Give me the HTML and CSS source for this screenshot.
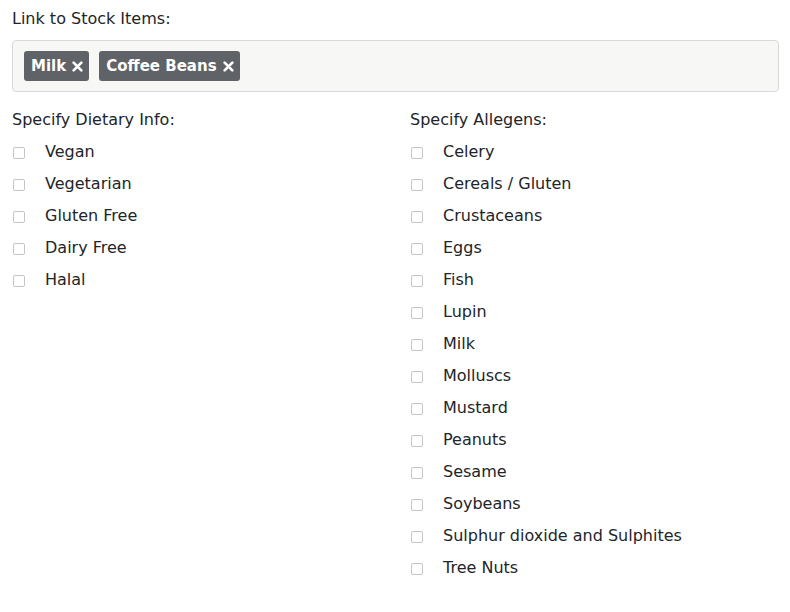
FILE: index.html
```html
<!DOCTYPE html>
<html>
<head>
<meta charset="utf-8">
<link rel="stylesheet" href="styles.css">
</head>
<body>
<div class="page">
  <div class="field">
    <div class="label">Link to Stock Items:</div>
    <div class="tagbox">
      <span class="tag">Milk <svg class="x" viewBox="0 0 10 10" width="10" height="10"><path d="M1.5 1.5 L8.5 8.5 M8.5 1.5 L1.5 8.5" stroke="#fff" stroke-width="2.4" stroke-linecap="round"/></svg></span>
      <span class="tag">Coffee Beans <svg class="x" viewBox="0 0 10 10" width="10" height="10"><path d="M1.5 1.5 L8.5 8.5 M8.5 1.5 L1.5 8.5" stroke="#fff" stroke-width="2.4" stroke-linecap="round"/></svg></span>
    </div>
  </div>
  <div class="cols">
    <div class="col">
      <div class="label">Specify Dietary Info:</div>
      <label class="opt"><span class="cb"></span>Vegan</label>
      <label class="opt"><span class="cb"></span>Vegetarian</label>
      <label class="opt"><span class="cb"></span>Gluten Free</label>
      <label class="opt"><span class="cb"></span>Dairy Free</label>
      <label class="opt"><span class="cb"></span>Halal</label>
    </div>
    <div class="col">
      <div class="label">Specify Allegens:</div>
      <label class="opt"><span class="cb"></span>Celery</label>
      <label class="opt"><span class="cb"></span>Cereals / Gluten</label>
      <label class="opt"><span class="cb"></span>Crustaceans</label>
      <label class="opt"><span class="cb"></span>Eggs</label>
      <label class="opt"><span class="cb"></span>Fish</label>
      <label class="opt"><span class="cb"></span>Lupin</label>
      <label class="opt"><span class="cb"></span>Milk</label>
      <label class="opt"><span class="cb"></span>Molluscs</label>
      <label class="opt"><span class="cb"></span>Mustard</label>
      <label class="opt"><span class="cb"></span>Peanuts</label>
      <label class="opt"><span class="cb"></span>Sesame</label>
      <label class="opt"><span class="cb"></span>Soybeans</label>
      <label class="opt"><span class="cb"></span>Sulphur dioxide and Sulphites</label>
      <label class="opt"><span class="cb"></span>Tree Nuts</label>
    </div>
  </div>
</div>
</body>
</html>
```
FILE: styles.css
```css
html, body {
  margin: 0;
  padding: 0;
  background: #ffffff;
}
body {
  font-family: "DejaVu Sans", sans-serif;
  font-size: 16px;
  line-height: 24px;
  color: #212529;
}
.page {
  padding: 7px 11px 0 12px;
}
.label {
  height: 24px;
}
.field .label {
  margin-bottom: 9px;
}
.tagbox {
  border: 1px solid #d9d9d9;
  border-radius: 4px;
  background: #f7f7f5;
  padding: 10px 11px;
  display: flex;
  gap: 10px;
  height: 30px;
}
.tag {
  display: inline-flex;
  align-items: center;
  height: 30px;
  padding: 0 6px 0 7px;
  background: #5f6266;
  color: #ffffff;
  border-radius: 3px;
  font-weight: bold;
  font-size: 15px;
  gap: 6px;
}
.tag .x {
  display: block;
  width: 11px;
  height: 11px;
  margin-top: 1px;
}
.cols {
  display: grid;
  grid-template-columns: 398px 1fr;
  margin-top: 16px;
}
.opt {
  display: flex;
  align-items: center;
  height: 24px;
  margin-top: 8px;
}
.cb {
  width: 10px;
  height: 10px;
  border: 1px solid #c4c4c4;
  border-radius: 2px;
  background: #fff;
  margin: 1px 20px 0 1px;
  flex: none;
}
```
